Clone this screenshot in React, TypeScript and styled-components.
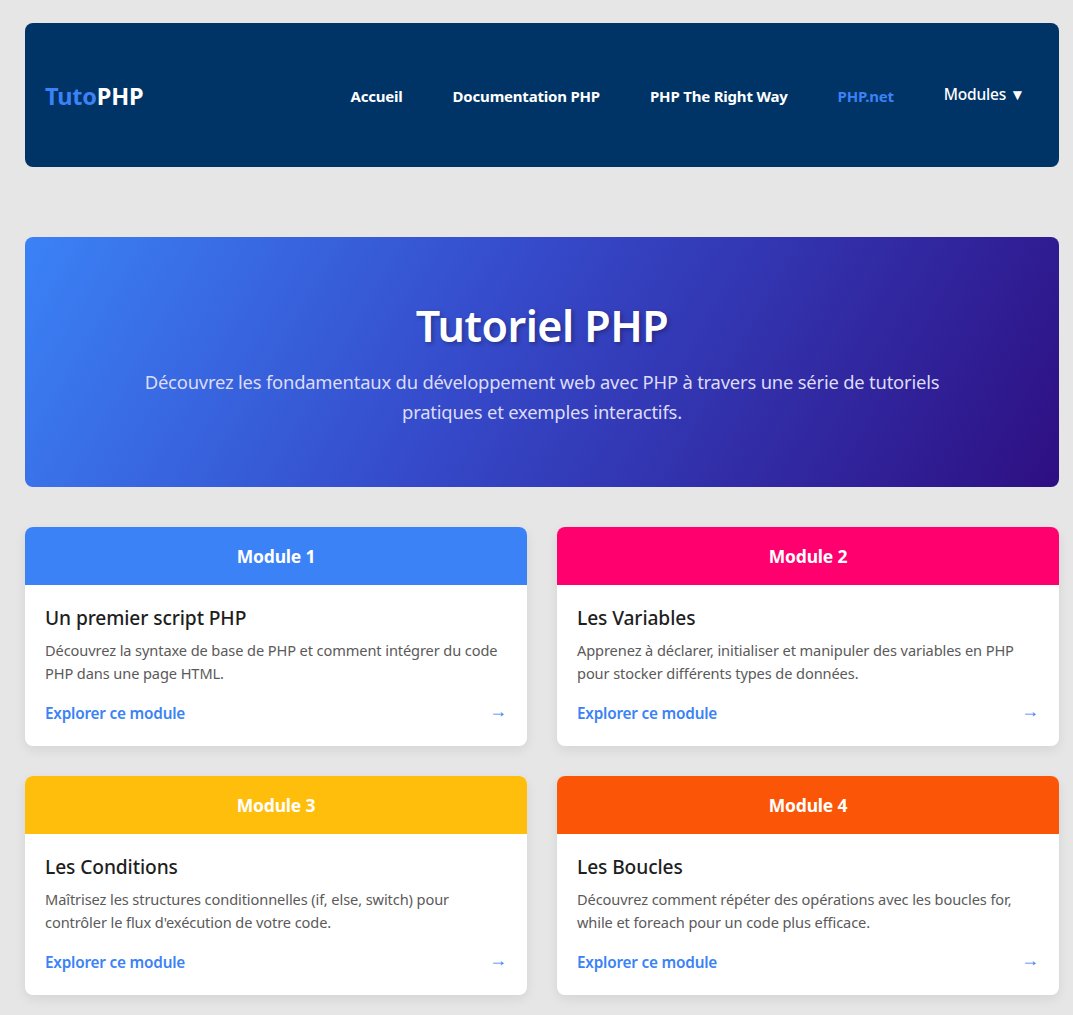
import React from "react";
import styled, { createGlobalStyle } from "styled-components";

const Global = createGlobalStyle`
  * { box-sizing: border-box; }
  body {
    margin: 0;
    background: #e6e6e6;
    font-family: "Noto Sans", "Open Sans", sans-serif;
  }
`;

const Page = styled.div`
  padding: 23px 14px 20px 25px;
  display: flex;
  flex-direction: column;
`;

const Header = styled.header`
  background: #003366;
  border-radius: 8px;
  height: 144px;
  display: flex;
  align-items: center;
  justify-content: space-between;
  padding: 1px 34px 0 20px;
`;

const Logo = styled.div`
  font-size: 23.5px;
  font-weight: 700;
  color: #ffffff;
  letter-spacing: -0.2px;
`;

const LogoAccent = styled.span`
  color: #3b82f6;
`;

const Nav = styled.nav`
  display: flex;
  align-items: center;
  gap: 50px;
`;

const NavLink = styled.a<{ $active?: boolean }>`
  color: ${(p) => (p.$active ? "#3b82f6" : "#ffffff")};
  font-size: 15px;
  font-weight: 700;
  text-decoration: none;
  letter-spacing: -0.2px;
`;

const Dropdown = styled.span`
  color: #ffffff;
  font-size: 15.5px;
  font-weight: 500;
  margin-top: -4px;
  letter-spacing: -0.2px;
`;

const Hero = styled.section`
  margin-top: 70px;
  height: 250px;
  border-radius: 8px;
  background: linear-gradient(120deg, #3b82f6 0%, #3549c9 45%, #2e0f82 100%);
  display: flex;
  flex-direction: column;
  align-items: center;
  justify-content: center;
  text-align: center;
`;

const HeroTitle = styled.h1`
  margin: 0 0 12px;
  color: #ffffff;
  font-size: 43px;
  line-height: 58px;
  font-weight: 600;
  letter-spacing: -0.5px;
  text-shadow: 2px 2px 4px rgba(0, 0, 0, 0.3);
`;

const HeroText = styled.p`
  margin: 0;
  max-width: 830px;
  color: #dcdcf8;
  font-size: 18.4px;
  line-height: 30px;
  letter-spacing: -0.2px;
`;

const Grid = styled.div`
  margin-top: 40px;
  display: grid;
  grid-template-columns: 1fr 1fr;
  gap: 30px;
`;

const Card = styled.article`
  background: #ffffff;
  border-radius: 8px;
  overflow: hidden;
  box-shadow: 0 4px 12px rgba(0, 0, 0, 0.08);
`;

const CardHead = styled.div<{ $color: string }>`
  background: ${(p) => p.$color};
  height: 58px;
  display: flex;
  align-items: center;
  justify-content: center;
  color: #ffffff;
  font-size: 17.5px;
  font-weight: 700;
  letter-spacing: -0.2px;
`;

const CardBody = styled.div`
  padding: 20px 20px 23px;
  display: flex;
  flex-direction: column;
`;

const CardTitle = styled.h3`
  margin: 0 0 8px;
  font-size: 19.2px;
  line-height: 26px;
  font-weight: 500;
  color: #1e1e1e;
  letter-spacing: -0.1px;
`;

const CardText = styled.p`
  margin: 0;
  font-size: 14.6px;
  line-height: 23px;
  color: #5a5a5a;
  letter-spacing: -0.1px;
`;

const CardFooter = styled.div`
  margin-top: 17px;
  height: 21px;
  display: flex;
  justify-content: space-between;
  align-items: center;
  color: #3b82f6;
`;

const ExploreLink = styled.a`
  color: #3b82f6;
  font-size: 15.3px;
  font-weight: 600;
  text-decoration: none;
  letter-spacing: -0.2px;
`;

const Arrow = styled.span`
  font-size: 18px;
  line-height: 1;
  margin-bottom: 5px;
`;

const modules = [
  {
    label: "Module 1",
    color: "#3b82f6",
    title: "Un premier script PHP",
    text: "Découvrez la syntaxe de base de PHP et comment intégrer du code PHP dans une page HTML.",
  },
  {
    label: "Module 2",
    color: "#ff006e",
    title: "Les Variables",
    text: "Apprenez à déclarer, initialiser et manipuler des variables en PHP pour stocker différents types de données.",
  },
  {
    label: "Module 3",
    color: "#ffbe0b",
    title: "Les Conditions",
    text: "Maîtrisez les structures conditionnelles (if, else, switch) pour contrôler le flux d'exécution de votre code.",
  },
  {
    label: "Module 4",
    color: "#fb5607",
    title: "Les Boucles",
    text: "Découvrez comment répéter des opérations avec les boucles for, while et foreach pour un code plus efficace.",
  },
];

export default function App() {
  return (
    <>
      <Global />
      <Page>
        <Header>
          <Logo>
            <LogoAccent>Tuto</LogoAccent>PHP
          </Logo>
          <Nav>
            <NavLink href="#">Accueil</NavLink>
            <NavLink href="#">Documentation PHP</NavLink>
            <NavLink href="#">PHP The Right Way</NavLink>
            <NavLink href="#" $active>
              PHP.net
            </NavLink>
            <Dropdown>Modules ▼</Dropdown>
          </Nav>
        </Header>
        <Hero>
          <HeroTitle>Tutoriel PHP</HeroTitle>
          <HeroText>
            Découvrez les fondamentaux du développement web avec PHP à travers une série de
            tutoriels pratiques et exemples interactifs.
          </HeroText>
        </Hero>
        <Grid>
          {modules.map((m) => (
            <Card key={m.label}>
              <CardHead $color={m.color}>{m.label}</CardHead>
              <CardBody>
                <CardTitle>{m.title}</CardTitle>
                <CardText>{m.text}</CardText>
                <CardFooter>
                  <ExploreLink href="#">Explorer ce module</ExploreLink>
                  <Arrow>→</Arrow>
                </CardFooter>
              </CardBody>
            </Card>
          ))}
        </Grid>
      </Page>
    </>
  );
}
